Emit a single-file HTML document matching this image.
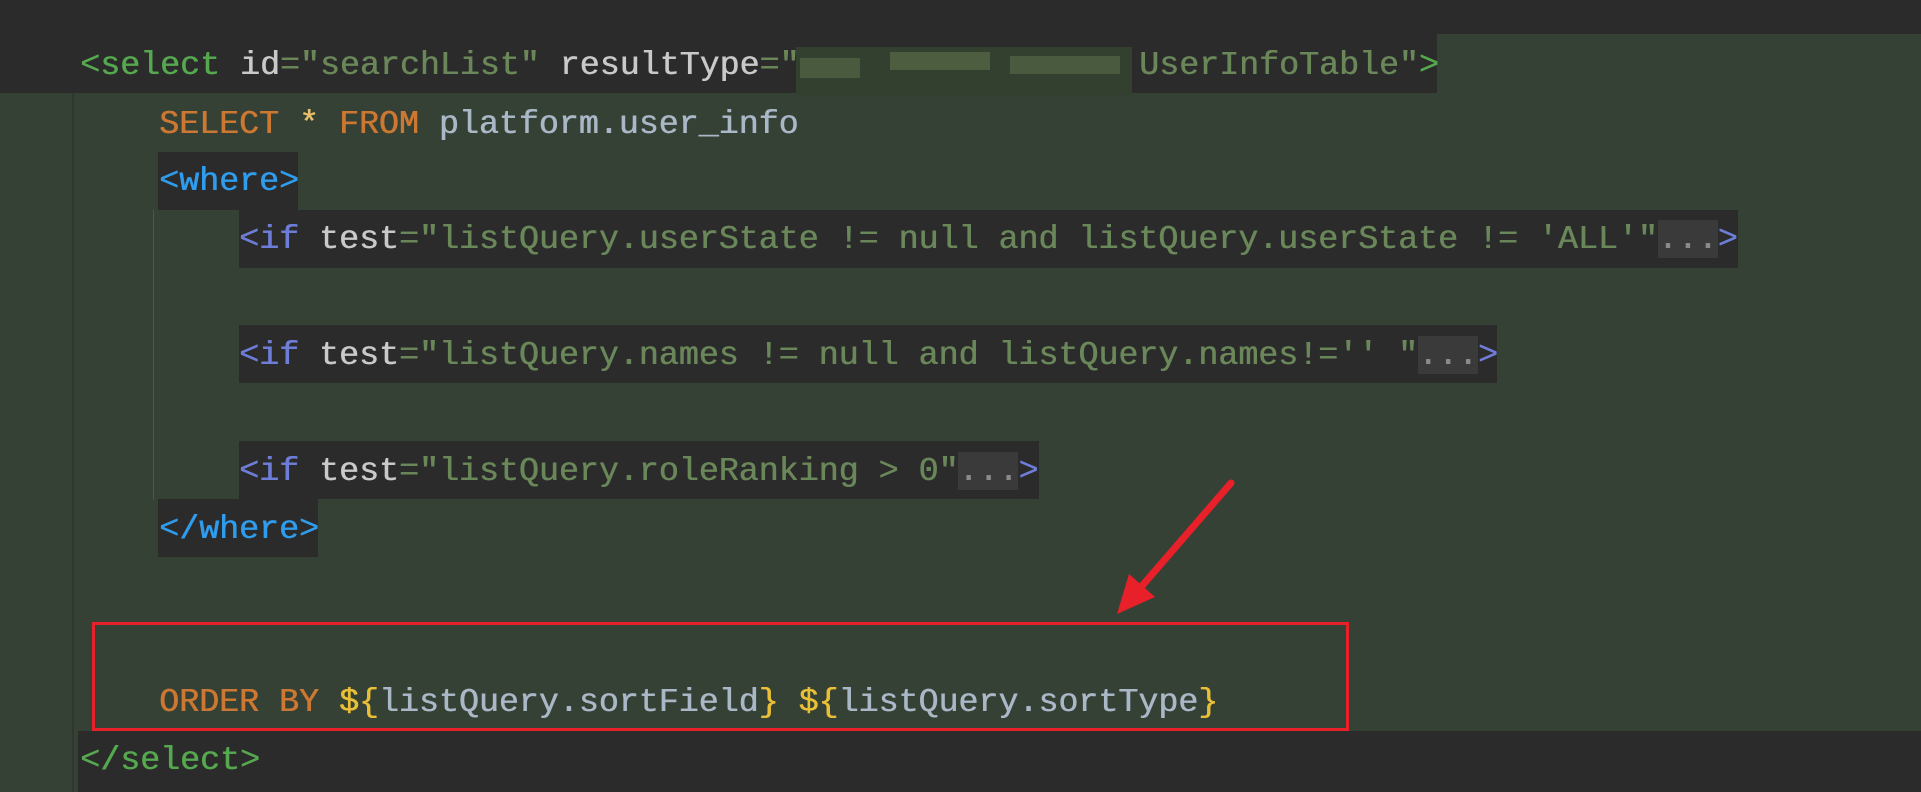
<!DOCTYPE html>
<html><head><meta charset="utf-8"><style>
html,body{margin:0;padding:0}
body{width:1921px;height:792px;background:#364135;position:relative;overflow:hidden;font-family:"Liberation Mono",monospace;font-size:33.3px}
.a{position:absolute}
.d{position:absolute;background:#2b2b2b}
.l{position:absolute;height:58px;line-height:58px;white-space:pre;color:#a9b7c6;text-shadow:0.6px 0 0 currentColor}
.tg{color:#56a84f}.at{color:#c9c9c9}.v{color:#6a8759}.k{color:#cc7832}.w{color:#2f9ced}.p{color:#6e7ed8}.y{color:#e8bf37}.g{color:#8a8a8a}
.e{background:#3a3a3a}
</style></head><body>
<div class="a" style="left:72px;top:0;width:2px;height:792px;background:#2f382e"></div>
<div class="d" style="left:0;top:0;width:1921px;height:34px"></div>
<div class="d" style="left:0;top:34px;width:1437px;height:59px"></div>
<div class="d" style="left:158px;top:152px;width:140px;height:58px"></div>
<div class="d" style="left:239px;top:210px;width:1499px;height:58px"></div>
<div class="d" style="left:239px;top:325px;width:1258px;height:58px"></div>
<div class="d" style="left:239px;top:441px;width:800px;height:58px"></div>
<div class="d" style="left:158px;top:499px;width:160px;height:58px"></div>
<div class="d" style="left:78px;top:731px;width:1843px;height:61px"></div>
<div class="a" style="left:153px;top:210px;width:1px;height:290px;background:#3a5a70"></div>
<div class="a" style="left:796px;top:47px;width:336px;height:48px;background:#33402f"></div>
<div class="a" style="left:800px;top:58px;width:60px;height:20px;background:#4a5a3e"></div>
<div class="a" style="left:890px;top:52px;width:100px;height:18px;background:#4d5d40"></div>
<div class="a" style="left:1010px;top:56px;width:110px;height:18px;background:#4a5a3e"></div>
<div class="l" style="left:80px;top:36px"><span class="tg">&lt;select</span> <span class="at">id</span><span class="v">="searchList"</span> <span class="at">resultType</span><span class="v">="                 UserInfoTable"</span><span class="tg">&gt;</span></div>
<div class="l" style="left:159px;top:95px"><span class="k">SELECT</span> <span style="color:#e8bf6a">*</span> <span class="k">FROM</span> platform.user_info</div>
<div class="l" style="left:159px;top:152px"><span class="w">&lt;where&gt;</span></div>
<div class="l" style="left:239px;top:210px"><span class="p">&lt;if</span> <span class="at">test</span><span class="v">="listQuery.userState != null and listQuery.userState != 'ALL'"</span><span class="g e">...</span><span class="p">&gt;</span></div>
<div class="l" style="left:239px;top:326px"><span class="p">&lt;if</span> <span class="at">test</span><span class="v">="listQuery.names != null and listQuery.names!='' "</span><span class="g e">...</span><span class="p">&gt;</span></div>
<div class="l" style="left:239px;top:442px"><span class="p">&lt;if</span> <span class="at">test</span><span class="v">="listQuery.roleRanking &gt; 0"</span><span class="g e">...</span><span class="p">&gt;</span></div>
<div class="l" style="left:159px;top:500px"><span class="w">&lt;/where&gt;</span></div>
<div class="l" style="left:159px;top:673px"><span class="k">ORDER BY</span> <span class="y">${</span>listQuery.sortField<span class="y">}</span> <span class="y">${</span>listQuery.sortType<span class="y">}</span></div>
<div class="l" style="left:80px;top:731px"><span class="tg">&lt;/select&gt;</span></div>
<div class="a" style="left:92px;top:622px;width:1251px;height:103px;border:3px solid #e8202a"></div>
<svg class="a" style="left:0;top:0" width="1921" height="792"><line x1="1231" y1="483" x2="1135" y2="594" stroke="#e8202a" stroke-width="7" stroke-linecap="round"/><polygon points="1117,614 1129,574 1155,597" fill="#e8202a"/></svg>
</body></html>
